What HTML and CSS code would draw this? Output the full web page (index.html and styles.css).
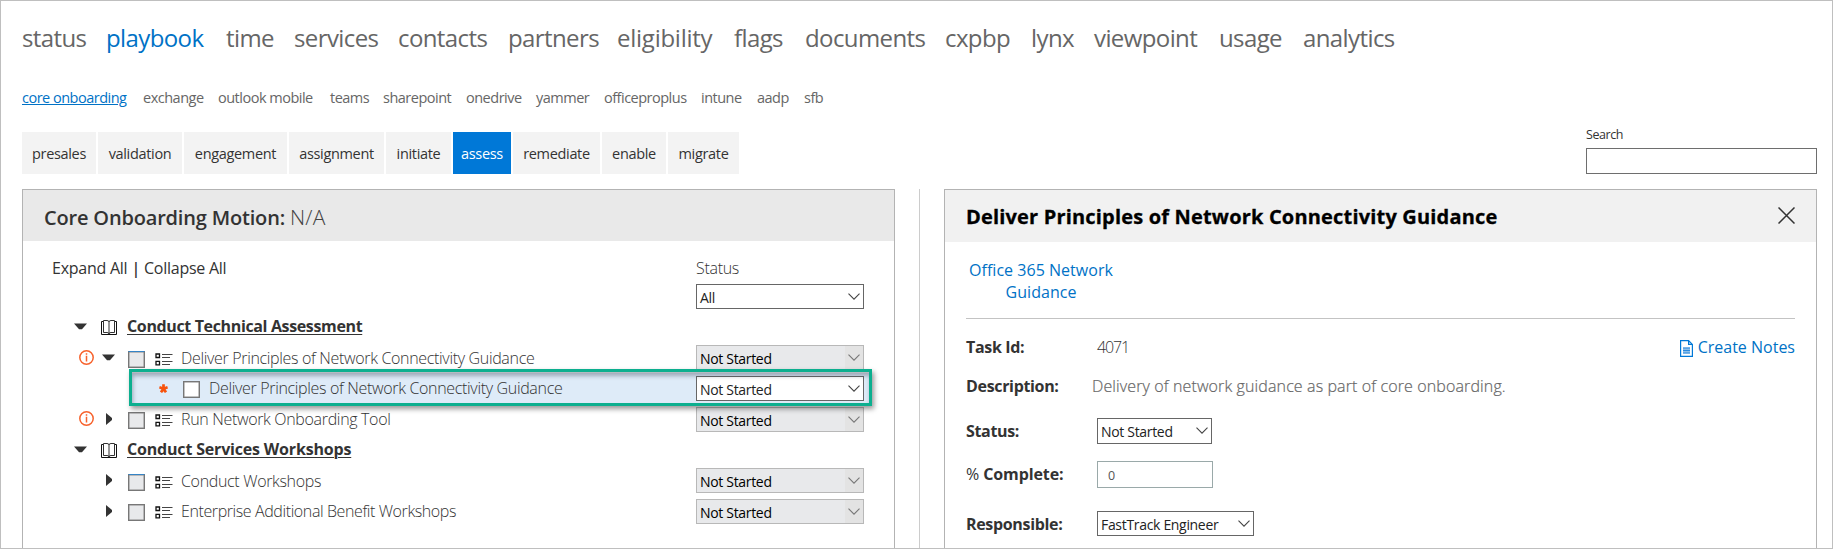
FILE: index.html
```
<!DOCTYPE html>
<html lang="en">
<head>
<meta charset="utf-8">
<title>Playbook - core onboarding</title>
<link rel="stylesheet" href="styles.css">
</head>
<body>
<svg width="0" height="0" class="defs">
  <symbol id="chev" viewBox="0 0 12 7"><path d="M.5.6 6 6.1 11.500.6" fill="none" stroke="currentColor" stroke-width="1.1"/></symbol>
  <symbol id="down" viewBox="0 0 13 7"><path d="M0 .5h13L8 6.200H5z" fill="#333"/></symbol>
  <symbol id="right" viewBox="0 0 6 12"><path d="M0 0 6 5v2L0 12z" fill="#333"/></symbol>
  <symbol id="book" viewBox="0 0 16 15"><path d="M2.500 1.500H.5v13h15v-13h-2" fill="none" stroke="#111"/><path d="M2.500 12.500V.5H6q2 0 2 1.500Q8 .5 10 .5h3.500v12H10q-2 0-2 1.500 0-1.500-2-1.500zM8 2v12" fill="none" stroke="#333"/></symbol>
  <symbol id="info" viewBox="0 0 15 15"><circle cx="7.500" cy="7.500" r="6.700" fill="none" stroke="#f7622c" stroke-width="1.500"/><path d="M7.500 3.300v1.500M7.500 5.800v5.700" stroke="#f7622c" stroke-width="1.500"/></symbol>
  <symbol id="list" viewBox="0 0 18 13"><path d="M1 1h3.500v3.500H1zM1 8.300h3.500v3.500H1z" fill="none" stroke="#111" stroke-width="1.300"/><path d="M7 1.500h10.500M7 4.500h8M7 8.500h10.500M7 11.500h8" stroke="#444"/></symbol>
  <symbol id="star" viewBox="0 0 9 9"><path d="M4.500 4.700V.3M4.500 4.700.4 3.300M4.500 4.700 8.600 3.300M4.500 4.700 2 8.300M4.500 4.700 7 8.300" stroke="#f7530c" stroke-width="2.700"/></symbol>
</svg>
<div class="page">
  <nav class="main-nav">
    <a>status</a><a class="current">playbook</a><a>time</a><a>services</a><a>contacts</a><a>partners</a><a>eligibility</a><a>flags</a><a>documents</a><a>cxpbp</a><a>lynx</a><a>viewpoint</a><a>usage</a><a>analytics</a>
  </nav>
  <nav class="sub-nav">
    <a class="current">core onboarding</a><a>exchange</a><a>outlook mobile</a><a>teams</a><a>sharepoint</a><a>onedrive</a><a>yammer</a><a>officeproplus</a><a>intune</a><a>aadp</a><a>sfb</a>
  </nav>
  <div class="toolbar">
    <div class="tabs">
      <a>presales</a><a>validation</a><a>engagement</a><a>assignment</a><a>initiate</a><a class="active">assess</a><a>remediate</a><a>enable</a><a>migrate</a>
    </div>
    <label class="search"><span>Search</span><input type="text"></label>
  </div>
  <main class="panes">
    <section class="panel tree">
      <h2 class="tree-title">Core Onboarding Motion: <span>N/A</span></h2>
      <div class="filter">
        <div class="links"><a>Expand All</a><b>|</b><a>Collapse All</a></div>
        <div class="status-filter"><span class="status-label">Status</span>
          <div class="select">All<svg class="chev"><use href="#chev"/></svg></div></div>
      </div>
      <div class="rows">
        <div class="row group"><svg class="down"><use href="#down"/></svg><svg class="book"><use href="#book"/></svg><a>Conduct Technical Assessment</a></div>
        <div class="row task"><svg class="info"><use href="#info"/></svg><i class="arrow"><svg class="down"><use href="#down"/></svg></i><i class="box blue"></i><svg class="list"><use href="#list"/></svg><span>Deliver Principles of Network Connectivity Guidance</span>
          <div class="select off">Not Started<svg class="chev"><use href="#chev"/></svg></div></div>
        <div class="row sub"><svg class="star"><use href="#star"/></svg><i class="box"></i><span>Deliver Principles of Network Connectivity Guidance</span>
          <div class="select">Not Started<svg class="chev"><use href="#chev"/></svg></div><div class="highlight"></div></div>
        <div class="row task"><svg class="info"><use href="#info"/></svg><i class="arrow"><svg class="right"><use href="#right"/></svg></i><i class="box"></i><svg class="list"><use href="#list"/></svg><span>Run Network Onboarding Tool</span>
          <div class="select off">Not Started<svg class="chev"><use href="#chev"/></svg></div></div>
        <div class="row group services"><svg class="down"><use href="#down"/></svg><svg class="book"><use href="#book"/></svg><a>Conduct Services Workshops</a></div>
        <div class="row task"><i class="info"></i><i class="arrow"><svg class="right"><use href="#right"/></svg></i><i class="box blue"></i><svg class="list"><use href="#list"/></svg><span>Conduct Workshops</span>
          <div class="select off">Not Started<svg class="chev"><use href="#chev"/></svg></div></div>
        <div class="row task"><i class="info"></i><i class="arrow"><svg class="right"><use href="#right"/></svg></i><i class="box"></i><svg class="list"><use href="#list"/></svg><span class="tight">Enterprise Additional Benefit Workshops</span>
          <div class="select off">Not Started<svg class="chev"><use href="#chev"/></svg></div></div>
      </div>
    </section>
    <div class="divider"></div>
    <section class="panel detail">
      <header class="detail-head"><h2>Deliver Principles of Network Connectivity Guidance</h2>
        <svg class="close" viewBox="0 0 17 17"><path d="M.5.5l16 16M16.500.5l-16 16" stroke="#333" stroke-width="1.500"/></svg></header>
      <div class="detail-body">
        <a class="guide">Office 365 Network<br>Guidance</a>
        <hr>
        <div class="field id"><b>Task Id:</b><span class="num">4071</span>
          <a class="notes"><svg viewBox="0 0 13 17"><path d="M.6.6h8l3.800 3.800v12H.6zM8.600.6v3.800h3.800" fill="none" stroke="#0078d7" stroke-width="1.200"/><path d="M3 7.500h7v6H3z" fill="#8dbfea"/><path d="M3 8h7M3 10.500h7M3 13h7" stroke="#2b8ade"/></svg>Create Notes</a></div>
        <div class="field desc"><b>Description:</b><span class="text">Delivery of network guidance as part of core onboarding.</span></div>
        <div class="field status"><b>Status:</b><div class="select">Not Started<svg class="chev"><use href="#chev"/></svg></div></div>
        <div class="field pct"><b><em>%</em> Complete:</b><input type="text" value="0"></div>
        <div class="field resp"><b>Responsible:</b><div class="select">FastTrack Engineer<svg class="chev"><use href="#chev"/></svg></div></div>
      </div>
    </section>
  </main>
</div>
</body>
</html>
```
FILE: styles.css
```
* { box-sizing: border-box; }
html, body { margin: 0; height: 549px; overflow: hidden; }
body { font-family: "Open Sans", "Noto Sans", sans-serif; font-size: 16px; color: #333; background: #fff; }
svg { display: block; flex: none; }
i, em { font-style: normal; }
.defs { position: absolute; }

.page { width: 1833px; height: 549px; border: 1px solid #bfbfbf; padding: 16px 15px 0 21px; display: flex; flex-direction: column; overflow: hidden; }

.main-nav { display: grid; grid-template-columns: 84px 120px 68px 104px 110px 109px 117px 71px 140px 86px 63px 125px 84px 110px; font-size: 24px; line-height: 41px; height: 40px; letter-spacing: -.6px; color: #666; white-space: nowrap; flex: none; }
.main-nav a:nth-child(7) { letter-spacing: -.25px; }
.main-nav .current { color: #0072c6; }
.sub-nav { display: grid; grid-template-columns: 121px 75px 112px 53px 83px 70px 68px 97px 56px 47px 40px; margin-top: 31px; font-size: 14.5px; line-height: 20px; letter-spacing: -.5px; color: #666; white-space: nowrap; flex: none; }
.sub-nav .current { color: #0072c6; text-decoration: underline; justify-self: start; }

.toolbar { display: flex; justify-content: space-between; align-items: flex-end; margin-top: 18px; height: 48px; flex: none; }
.tabs { display: grid; grid-template-columns: 74px 84px 103px 95px 65px 58px 87px 64px 71px; gap: 2px; }
.tabs a { height: 42px; line-height: 43px; text-align: center; background: #f3f3f3; font-size: 14.5px; letter-spacing: -.33px; }
.tabs .active { background: #0078d7; color: #fff; }
.search { display: flex; flex-direction: column; gap: 5px; font-size: 12.5px; line-height: 16px; letter-spacing: -.45px; }
.search input { width: 231px; height: 26px; border: 1px solid #6e6e6e; background: #fff; padding: 0; }

.panes { display: flex; margin-top: 15px; flex: 1; min-height: 0; }
.panel { border: 1px solid #b3b3b3; border-bottom: 0; width: 873px; flex: none; }
.divider { width: 1px; margin: 0 24px; background: #ccc; flex: none; }
h2 { margin: 0; font-size: 20px; white-space: nowrap; }
.tree-title { height: 51px; padding: 2px 0 0 21px; line-height: 50px; background: #e9e9e9; font-weight: 600; letter-spacing: -.18px; }
.tree-title span { font-size: 21px; font-weight: 300; color: #444; letter-spacing: .2px; }

.filter { display: flex; justify-content: space-between; padding: 15px 30px 0 29px; height: 70px; }
.links { display: flex; gap: 4px; line-height: 25px; letter-spacing: -.25px; }
.links b { font-weight: 600; }
.status-label { display: block; font-weight: 300; line-height: 24px; margin-bottom: 4px; letter-spacing: -.3px; }
.select { position: relative; width: 168px; height: 25px; border: 1px solid #666; background: #fff; padding: 0 3px; font-size: 14px; line-height: 25px; letter-spacing: -.32px; color: #222; display: flex; justify-content: space-between; white-space: nowrap; }
.chev { width: 12px; height: 7px; margin-top: 8px; color: #444; }
.select.off { background: linear-gradient(90deg, #e8e9eb 148px, #e3e3e3 148px); border-color: #b8b8b8; color: #000; }
.select.off .chev { color: #777; }

.row { display: flex; align-items: center; height: 30.75px; position: relative; }
.row span { font-weight: 300; letter-spacing: -.33px; white-space: nowrap; line-height: 22px; padding-top: 1px; }
.row .tight { letter-spacing: -.4px; }
.row .select { margin: 1px 30px 0 auto; flex: none; }
.group { padding-left: 51px; }
.group a { font-weight: 700; letter-spacing: -.36px; text-decoration: underline; text-decoration-thickness: 1px; text-underline-offset: 2px; white-space: nowrap; }
.services a { letter-spacing: -.18px; }
.down { width: 13px; height: 7px; }
.right { width: 6px; height: 12px; }
.book { width: 16px; height: 15px; margin: 2px 10px 0 14px; }
.task { padding-left: 56px; }
.info { width: 15px; height: 15px; flex: none; }
.arrow { width: 34px; padding-left: 8px; flex: none; }
.arrow .right { margin-left: 4px; }
.box { width: 17px; height: 17px; border: 1px solid #777; box-shadow: inset 0 0 0 .5px #888; background: #e8e9eb; flex: none; margin-top: 4px; }
.box.blue { border-top-color: #3584c6; }
.list { width: 18px; height: 13px; margin: 4px 8px 0 10px; }
.sub { padding-left: 136px; background: linear-gradient(#deebf8, #deebf8) 108px 0 / 738px 30px no-repeat; }
.star { width: 9px; height: 9px; margin-top: 2px; }
.sub .box { background: #fff; margin: 4px 9px 0 15px; }
/* Callout frame drawn over the selected task */
.highlight { position: absolute; left: 106px; top: -3.500px; width: 743px; height: 37px; border: 3px solid #0caf8f; box-shadow: 2px 3px 5px rgba(0,0,0,.4), inset 1px 4px 4px rgba(60,70,90,.4); z-index: 2; }

.detail-head { display: flex; justify-content: space-between; height: 52px; padding: 2px 21px 0; background: #f1f1f1; }
.detail-head h2 { color: #000; line-height: 50px; letter-spacing: .18px; -webkit-text-stroke: .3px #000; }
.close { width: 17px; height: 17px; margin-top: 15px; }
.detail-body { padding: 17px 21px 0; }
.guide { display: block; width: 150px; line-height: 22px; text-align: center; color: #0072c6; letter-spacing: .03px; white-space: nowrap; }
hr { height: 1px; border: 0; background: #c3c3c3; margin: 15px 0 8px; }
.field { display: flex; align-items: center; }
.field b { width: 131px; letter-spacing: -.33px; flex: none; }
.pct b { letter-spacing: -.1px; }
.field em { font-weight: 400; }
.id { height: 39px; }
.desc { height: 40px; }
.status { height: 49px; }
.pct { height: 38px; }
.resp { height: 61px; }
.num { font-weight: 300; letter-spacing: -1.1px; }
.text { margin-left: -5px; color: #666; letter-spacing: .12px; white-space: nowrap; font-weight: 300; -webkit-text-stroke: .2px #666; }
.notes { margin-left: auto; display: flex; gap: 5px; color: #0072c6; }
.notes svg { width: 13px; height: 17px; margin-top: 4px; }
.status .select { width: 115px; height: 26px; }
.resp .select { width: 157px; }
.pct input { width: 116px; height: 27px; border: 1px solid #9aa9a9; padding: 2px 0 0 10px; font: 12.5px "Open Sans", sans-serif; color: #555; }
```
